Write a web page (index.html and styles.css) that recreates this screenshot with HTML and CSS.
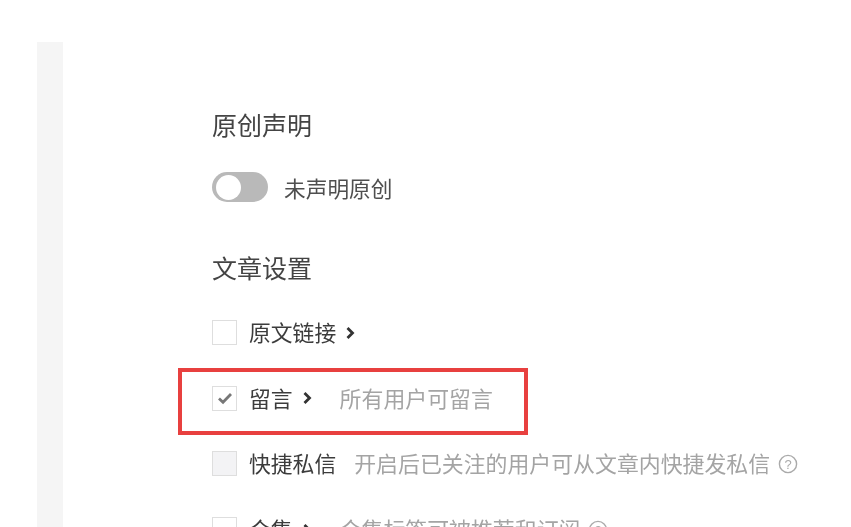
FILE: index.html
```html
<!DOCTYPE html>
<html lang="zh-CN">
<head>
<meta charset="utf-8">
<title>文章设置</title>
<link rel="stylesheet" href="styles.css">
</head>
<body>
<div class="page">
  <aside class="rail"></aside>
  <main class="content">
    <h2 class="heading">原创声明</h2>
    <div class="switch-row">
      <span class="switch"><span class="knob"></span></span>
      <span class="switch-label">未声明原创</span>
    </div>
    <h2 class="heading heading-second">文章设置</h2>
    <div class="option">
      <span class="box"></span>
      <span class="label">原文链接</span>
      <svg class="chevron" viewBox="0 0 10 14"><path d="M2.5 2 L7.5 7 L2.5 12" fill="none" stroke="#333" stroke-width="2.8"/></svg>
    </div>
    <div class="option">
      <span class="box"><svg class="tick" viewBox="0 0 16 14"><path d="M2 7.5 L6 11.2 L14 3" fill="none" stroke="#777" stroke-width="2.8"/></svg></span>
      <span class="label">留言</span>
      <svg class="chevron" viewBox="0 0 10 14"><path d="M2.5 2 L7.5 7 L2.5 12" fill="none" stroke="#333" stroke-width="2.8"/></svg>
      <span class="hint hint-after-chevron">所有用户可留言</span>
      <span class="highlight"></span>
    </div>
    <div class="option">
      <span class="box box-disabled"></span>
      <span class="label">快捷私信</span>
      <span class="hint hint-after-label">开启后已关注的用户可从文章内快捷发私信</span>
      <svg class="help" viewBox="0 0 20 20"><circle cx="10" cy="10" r="8.6" fill="none" stroke="#aaa" stroke-width="1.4"/><text x="10" y="14.6" class="help-mark">?</text></svg>
    </div>
    <div class="option">
      <span class="box"></span>
      <span class="label">合集</span>
      <svg class="chevron" viewBox="0 0 10 14"><path d="M2.5 2 L7.5 7 L2.5 12" fill="none" stroke="#333" stroke-width="2.8"/></svg>
      <span class="hint hint-after-chevron">合集标签可被推荐和订阅</span>
      <svg class="help" viewBox="0 0 20 20"><circle cx="10" cy="10" r="8.6" fill="none" stroke="#aaa" stroke-width="1.4"/><text x="10" y="14.6" class="help-mark">?</text></svg>
    </div>
  </main>
</div>
</body>
</html>
```
FILE: styles.css
```css
* { box-sizing: border-box; }
html, body { margin: 0; height: 100%; background: #fff; }
.page {
  width: 851px;
  height: 527px;
  overflow: hidden;
  display: flex;
  font-family: "Noto Sans CJK SC", "Liberation Sans", sans-serif;
  color: #4a4a4a;
}
.rail {
  width: 26px;
  margin: 42px 0 0 37px;
  background: #f5f5f5;
  flex: none;
}
.content {
  margin-left: 149px;
  padding-top: 106px;
  flex: 1;
  min-width: 0;
  filter: blur(0.4px);
}
.heading {
  margin: 0;
  font-size: 25px;
  line-height: 36px;
  font-weight: 400;
  color: #444;
}
.heading-second { margin-top: 46px; }
.switch-row {
  display: flex;
  align-items: center;
  margin-top: 29px;
  height: 32px;
}
.switch {
  width: 56px;
  height: 30px;
  border-radius: 15px;
  background: #b9b9b9;
  display: flex;
  align-items: center;
  padding-left: 4px;
  flex: none;
}
.knob { width: 25px; height: 25px; border-radius: 50%; background: #fff; }
.switch-label { margin-left: 16px; padding-top: 2px; font-size: 21.7px; line-height: 32px; color: #4f4f4f; }
.option {
  position: relative;
  display: flex;
  align-items: center;
  height: 25px;
  margin-top: 40.7px;
  white-space: nowrap;
}
.heading-second + .option { margin-top: 35px; }
.box {
  width: 25px;
  height: 25px;
  border: 1.5px solid #dedede;
  background: #fff;
  flex: none;
  display: flex;
  align-items: center;
  justify-content: center;
}
.box-disabled { background: #f3f3f5; }
.tick { width: 16px; height: 14px; }
.label { margin-left: 12px; padding-bottom: 2px; font-size: 21.8px; color: #3c3c3c; }
.chevron { width: 10px; height: 14px; margin-left: 9px; flex: none; }
.hint { padding-bottom: 2px; font-size: 21.9px; color: #a4a4a4; }
.hint-after-chevron { margin-left: 28px; }
.hint-after-label { margin-left: 18px; }
.help { width: 20px; height: 20px; margin-left: 8px; flex: none; }
.help-mark { font-size: 13px; fill: #aaa; text-anchor: middle; font-family: "Liberation Sans", sans-serif; }
.highlight {
  position: absolute;
  left: -34px;
  top: -18px;
  width: 350px;
  height: 67px;
  border: 4px solid #e8403f;
  pointer-events: none;
}
```
